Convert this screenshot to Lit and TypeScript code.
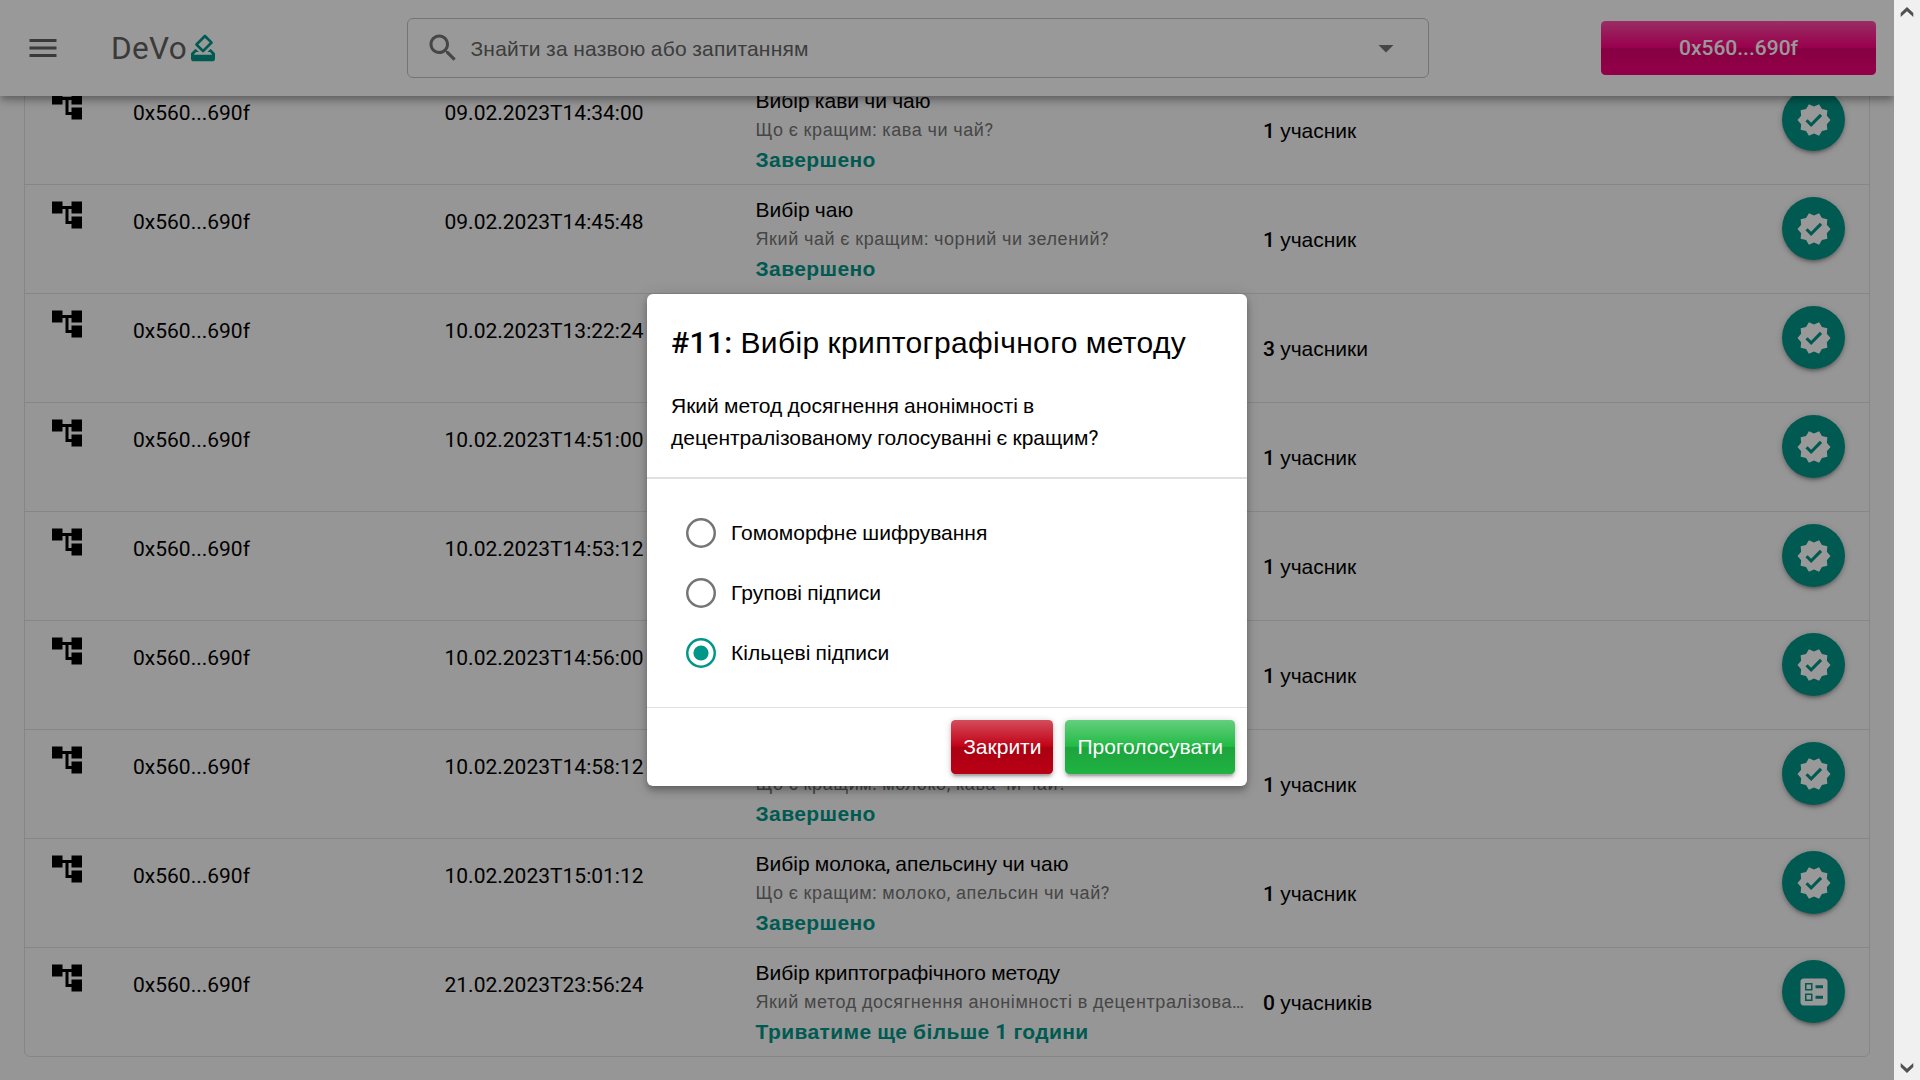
import { LitElement, html, css, svg, nothing } from "lit";
import { customElement } from "lit/decorators.js";

interface Poll {
  date: string;
  title?: string;
  question?: string;
  status?: string;
  count: string;
  noun: string;
  open?: boolean;
}

const DONE = "Завершено";

const polls: Poll[] = [
  { date: "09.02.2023T14:34:00", title: "Вибір кави чи чаю", question: "Що є кращим: кава чи чай?", status: DONE, count: "1", noun: "учасник" },
  { date: "09.02.2023T14:45:48", title: "Вибір чаю", question: "Який чай є кращим: чорний чи зелений?", status: DONE, count: "1", noun: "учасник" },
  { date: "10.02.2023T13:22:24", count: "3", noun: "учасники" },
  { date: "10.02.2023T14:51:00", count: "1", noun: "учасник" },
  { date: "10.02.2023T14:53:12", count: "1", noun: "учасник" },
  { date: "10.02.2023T14:56:00", count: "1", noun: "учасник" },
  { date: "10.02.2023T14:58:12", question: "Що є кращим: молоко, кава чи чай?", status: DONE, count: "1", noun: "учасник" },
  { date: "10.02.2023T15:01:12", title: "Вибір молока, апельсину чи чаю", question: "Що є кращим: молоко, апельсин чи чай?", status: DONE, count: "1", noun: "учасник" },
  { date: "21.02.2023T23:56:24", title: "Вибір криптографічного методу", question: "Який метод досягнення анонімності в децентралізова…", status: "Триватиме ще більше 1 години", count: "0", noun: "учасників", open: true },
];

const options = ["Гомоморфне шифрування", "Групові підписи", "Кільцеві підписи"];

/** Cyrillic runs are set in the sans fallback face, everything else in Roboto. */
const mixed = (text = "") =>
  text.split(/([\u0400-\u04ff]+)/).map((part, i) => (i % 2 ? html`<span class="cyr">${part}</span>` : part));

const icon = (d: string, cls = "") => html`<svg class="icon ${cls}" viewBox="0 0 24 24">${svg`<path d=${d}></path>`}</svg>`;

const I = {
  menu: "M3 18h18v-2H3v2zm0-5h18v-2H3v2zm0-7v2h18V6H3z",
  search: "M15.5 14h-.79l-.28-.27C15.41 12.59 16 11.11 16 9.5 16 5.91 13.09 3 9.5 3S3 5.91 3 9.5 5.91 16 9.5 16c1.61 0 3.09-.59 4.23-1.57l.27.28v.79l5 4.99L20.49 19l-4.99-5zm-6 0C7.01 14 5 11.99 5 9.5S7.01 5 9.5 5 14 7.01 14 9.5 11.99 14 9.5 14z",
  drop: "M7 10l5 5 5-5z",
  tree: "M22 11V3h-7v3H9V3H2v8h7V8h2v10h4v3h7v-8h-7v3h-2V8h2v3z",
  verified: "M23 12l-2.44-2.79.34-3.69-3.61-.82-1.89-3.2L12 2.96 8.6 1.5 6.71 4.69 3.1 5.5l.34 3.7L1 12l2.44 2.79-.34 3.7 3.61.82L8.6 22.5l3.4-1.47 3.4 1.46 1.89-3.19 3.61-.82-.34-3.69L23 12zm-12.91 4.72l-3.8-3.81 1.48-1.48 2.32 2.33 5.85-5.87 1.48 1.48-7.33 7.35z",
  ballot: "M13 9.5h5v-2h-5v2zm0 7h5v-2h-5v2zM19 21H5c-1.1 0-2-.9-2-2V5c0-1.1.9-2 2-2h14c1.1 0 2 .9 2 2v14c0 1.1-.9 2-2 2zM6 11h5V6H6v5zm1-4h3v3H7V7zM6 18h5v-5H6v5zm1-4h3v3H7v-3z",
  vote: "M18 13h-.68l-2 2h1.91L19 17H5l1.78-2h2.05l-2-2H6l-3 3v4c0 1.1.89 2 1.99 2H19c1.1 0 2-.89 2-2v-4l-3-3zm-1-5.05l-4.95 4.95-3.54-3.54 4.95-4.95L17 7.95zm-4.24-5.66L6.39 8.66c-.39.39-.39 1.02 0 1.41l4.95 4.95c.39.39 1.02.39 1.41 0l6.36-6.36c.39-.39.39-1.02 0-1.41L14.16 2.3c-.38-.4-1.01-.4-1.4-.01z",
};

@customElement("app-root")
export class AppRoot extends LitElement {
  static styles = css`
    :host {
      display: block;
      font-family: Roboto, "Liberation Sans", sans-serif;
      font-size: 21px;
      line-height: 31.5px;
      color: #000;
    }
    * { box-sizing: border-box; }
    .cyr { font-family: "Liberation Sans", sans-serif; line-height: 0; }
    .icon { display: block; width: 36px; height: 36px; fill: currentColor; flex: none; }
    .window { position: relative; display: grid; grid-template-columns: 1fr 26px; width: 1920px; height: 1080px; overflow: hidden; }
    .page { display: flex; flex-direction: column; height: 1080px; overflow: hidden; background: #fafafa; }

    .header {
      position: relative; z-index: 1; flex: none;
      display: grid; grid-template-columns: 381.6px 1022px 1fr auto; align-items: center;
      height: 96px; padding: 0 18px 0 25.4px;
      background: #fff; color: #616161;
      box-shadow: 0 3px 6px -1.5px #0003, 0 6px 7.5px #00000024, 0 1.5px 15px #0000001f;
    }
    .brand { display: flex; align-items: center; }
    .name { margin-left: 49.6px; padding-top: 2px; font-size: 31.5px; letter-spacing: 0.315px; line-height: 48px; }
    .logo { width: 32px; height: 32px; color: #009688; }
    .search { display: flex; align-items: center; height: 60px; padding: 0 24px 0 17.2px; border: 1px solid #c2c2c2; border-radius: 6px; color: #757575; }
    .search .label { flex: 1; margin-left: 9.3px; padding-top: 3px; letter-spacing: 0.197px; color: #666; }
    .btn {
      display: flex; align-items: center; justify-content: center;
      height: 54px; padding: 2px 12px 0; border-radius: 4.5px; color: #fff; font-weight: 500;
      background-image: linear-gradient(to bottom, rgba(255,255,255,.3), rgba(255,255,255,0) 50%, rgba(0,0,0,.12) 51%, rgba(0,0,0,.04));
    }
    .wallet { width: 275px; background-color: #ff0080; }

    .list { flex: none; margin: -21px 24px 0; border: 1px solid #e0e0e0; border-radius: 6px; }
    .row {
      display: grid; grid-template-columns: 84px 311.5px 311px 489.5px 1fr 63px; align-items: start;
      height: 109px; padding: 12px 24px 0; border-bottom: 1px solid #e0e0e0;
    }
    .row:last-child { border-bottom: 0; height: 108px; }
    .plain { padding-top: 10px; }
    .about { display: flex; flex-direction: column; padding-top: 1px; }
    .title { height: 26px; line-height: 25px; }
    .question { height: 30px; line-height: 30px; font-size: 18px; letter-spacing: 0.6px; color: #757575; white-space: nowrap; }
    .status { height: 31px; line-height: 31px; color: #009688; font-weight: 700; letter-spacing: 0.4px; }
    .people { padding: 28px 0 0 18px; }
    .people b { font-weight: 500; }
    .fab {
      display: grid; place-items: center; width: 63px; height: 63px; border-radius: 50%;
      background: #009688; color: #fff;
      box-shadow: 0 1.5px 7.5px #0003, 0 3px 3px #00000024, 0 4.5px 1.5px -3px #0000001f;
    }

    .scroll { display: flex; flex-direction: column; justify-content: space-between; align-items: center; padding: 7px 0; background: #f0f0f0; }
    .arrow { width: 14px; height: 10px; fill: #505050; }

    .backdrop {
      position: absolute; inset: 0 26px 0 0; z-index: 2;
      display: flex; align-items: center; justify-content: center; background: rgba(0,0,0,.4);
    }
    .dialog {
      width: 600px; height: 492px; border-radius: 6px; background: #fff;
      box-shadow: 0 3px 6px -1.5px #0003, 0 6px 7.5px #00000024, 0 1.5px 15px #0000001f;
      display: flex; flex-direction: column;
    }
    .head { height: 185px; flex: none; padding: 25px 24px 0; border-bottom: 2px solid #e0e0e0; }
    .heading { font-size: 30px; line-height: 48px; font-weight: 500; letter-spacing: 0.375px; }
    .ask { margin-top: 23px; line-height: 32px; }
    .options { flex: 1; padding: 24px 39px 0; }
    .option { display: flex; align-items: center; gap: 15px; height: 60px; }
    .caption { padding-top: 2px; }
    .radio { width: 30px; height: 30px; fill: none; stroke: #757575; stroke-width: 2.5; }
    .checked { stroke: #009688; }
    .dot { fill: #009688; stroke: none; }
    .actions { display: flex; justify-content: flex-end; gap: 12px; height: 79px; flex: none; padding: 12px; border-top: 1px solid #e0e0e0; }
    .actions .btn { padding-top: 0; box-shadow: 0 1.5px 7.5px #0003, 0 3px 3px #00000024, 0 4.5px 1.5px -3px #0000001f; }
    .close { background-color: #c10015; }
    .submit { background-color: #21ba45; }
  `;

  private row(p: Poll) {
    return html`<div class="row">
      ${icon(I.tree)}
      <div class="plain">0x560...690f</div>
      <div class="plain">${p.date}</div>
      <div class="about">
        <div class="title">${p.title ? mixed(p.title) : nothing}</div>
        <div class="question">${p.question ? mixed(p.question) : nothing}</div>
        <div class="status">${p.status ? mixed(p.status) : nothing}</div>
      </div>
      <div class="people"><b>${p.count}</b> ${mixed(p.noun)}</div>
      <div class="fab">${icon(p.open ? I.ballot : I.verified)}</div>
    </div>`;
  }

  render() {
    return html`<div class="window">
      <div class="page">
        <header class="header">
          <div class="brand">${icon(I.menu)}<div class="name">DeVo</div>${icon(I.vote, "logo")}</div>
          <div class="search">${icon(I.search)}<div class="label">${mixed("Знайти за назвою або запитанням")}</div>${icon(I.drop)}</div>
          <div></div>
          <div class="btn wallet">0x560...690f</div>
        </header>
        <main class="list">${polls.map((p) => this.row(p))}</main>
      </div>
      <div class="scroll">
        <svg class="arrow" viewBox="0 0 14 10"><path d="M7 0L13.3 6V10L7 4.2L.7 10V6z"></path></svg>
        <svg class="arrow" viewBox="0 0 14 10"><path d="M7 10L13.3 4V0L7 5.8L.7 0V4z"></path></svg>
      </div>
      <div class="backdrop">
        <section class="dialog">
          <div class="head">
            <div class="heading">${mixed("#11: Вибір криптографічного методу")}</div>
            <div class="ask">${mixed("Який метод досягнення анонімності в децентралізованому голосуванні є кращим?")}</div>
          </div>
          <div class="options">
            ${options.map((o, i) => html`<div class="option">
              <svg class="radio ${i === 2 ? "checked" : ""}" viewBox="0 0 30 30">
                <circle cx="15" cy="15" r="13.75"></circle>
                ${i === 2 ? svg`<circle class="dot" cx="15" cy="15" r="7.6"></circle>` : nothing}
              </svg>
              <div class="caption">${mixed(o)}</div>
            </div>`)}
          </div>
          <div class="actions">
            <div class="btn close">${mixed("Закрити")}</div>
            <div class="btn submit">${mixed("Проголосувати")}</div>
          </div>
        </section>
      </div>
    </div>`;
  }
}
